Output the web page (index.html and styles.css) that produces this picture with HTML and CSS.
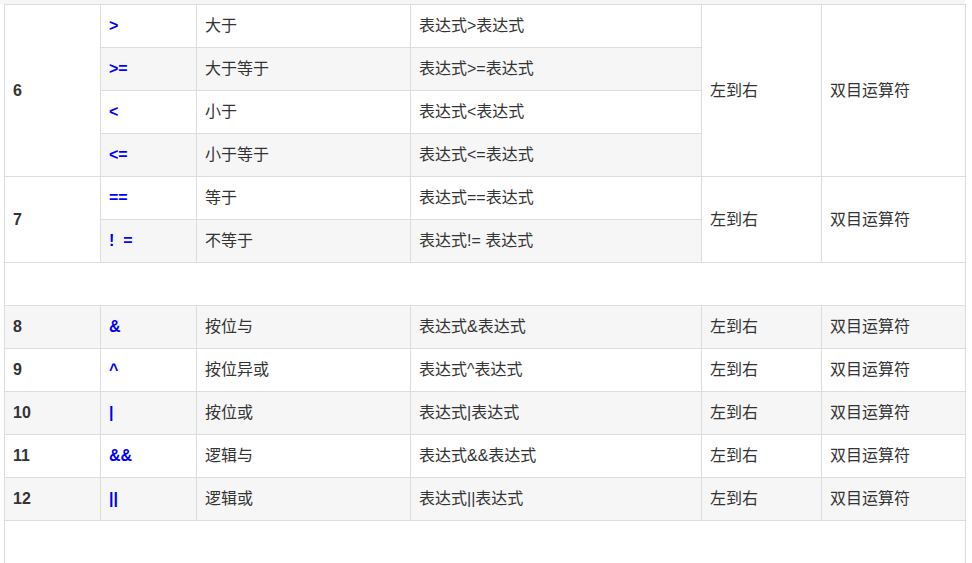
FILE: index.html
```html
<!DOCTYPE html>
<html lang="zh-CN">
<head>
<meta charset="utf-8">
<title>运算符优先级</title>
<link rel="stylesheet" href="styles.css">
</head>
<body>
<div class="prev-row"></div>
<table class="ops">
  <colgroup>
    <col class="c1"><col class="c2"><col class="c3"><col class="c4"><col class="c5"><col class="c6">
  </colgroup>
  <tbody>
    <tr>
      <td rowspan="4" class="num">6</td>
      <td class="op">&gt;</td><td>大于</td><td>表达式&gt;表达式</td>
      <td rowspan="4">左到右</td><td rowspan="4">双目运算符</td>
    </tr>
    <tr class="alt"><td class="op">&gt;=</td><td>大于等于</td><td>表达式&gt;=表达式</td></tr>
    <tr><td class="op">&lt;</td><td>小于</td><td>表达式&lt;表达式</td></tr>
    <tr class="alt"><td class="op">&lt;=</td><td>小于等于</td><td>表达式&lt;=表达式</td></tr>
    <tr>
      <td rowspan="2" class="num">7</td>
      <td class="op">==</td><td>等于</td><td>表达式==表达式</td>
      <td rowspan="2">左到右</td><td rowspan="2">双目运算符</td>
    </tr>
    <tr class="alt"><td class="op">!&nbsp;&nbsp;=</td><td>不等于</td><td>表达式!= 表达式</td></tr>
    <tr><td colspan="6" class="empty"></td></tr>
    <tr class="alt"><td class="num">8</td><td class="op">&amp;</td><td>按位与</td><td>表达式&amp;表达式</td><td>左到右</td><td>双目运算符</td></tr>
    <tr><td class="num">9</td><td class="op">^</td><td>按位异或</td><td>表达式^表达式</td><td>左到右</td><td>双目运算符</td></tr>
    <tr class="alt"><td class="num">10</td><td class="op">|</td><td>按位或</td><td>表达式|表达式</td><td>左到右</td><td>双目运算符</td></tr>
    <tr><td class="num">11</td><td class="op">&amp;&amp;</td><td>逻辑与</td><td>表达式&amp;&amp;表达式</td><td>左到右</td><td>双目运算符</td></tr>
    <tr class="alt"><td class="num">12</td><td class="op">||</td><td>逻辑或</td><td>表达式||表达式</td><td>左到右</td><td>双目运算符</td></tr>
    <tr class="tail"><td colspan="6"></td></tr>
  </tbody>
</table>
</body>
</html>
```

FILE: styles.css
```css
html, body {
  margin: 0;
  padding: 0;
  background: #fff;
}

body {
  font-family: "Liberation Sans", "Noto Sans CJK SC", sans-serif;
  font-size: 16px;
  color: #333;
  overflow: hidden;
}

.prev-row {
  height: 4px;
  background: #f6f6f6;
  width: 965px;
}

.ops {
  margin-left: 4px;
  border-collapse: collapse;
  table-layout: fixed;
  width: 961px;
}

.c1 { width: 96px; }
.c2 { width: 96px; }
.c3 { width: 214px; }
.c4 { width: 291px; }
.c5 { width: 120px; }
.c6 { width: 144px; }

.ops td {
  border: 1px solid #dddddd;
  padding: 9px 8px;
  line-height: 24px;
  height: 24px;
  vertical-align: middle;
  white-space: nowrap;
}

.ops tr.alt td {
  background: #f6f6f6;
}

.ops td[rowspan] {
  background: #fff;
}

.num {
  font-weight: bold;
}

.op {
  font-weight: bold;
  color: #0000ff;
}

.ops td.empty {
  background: #fff;
}

.ops tr.tail td {
  border-bottom: none;
}
```
